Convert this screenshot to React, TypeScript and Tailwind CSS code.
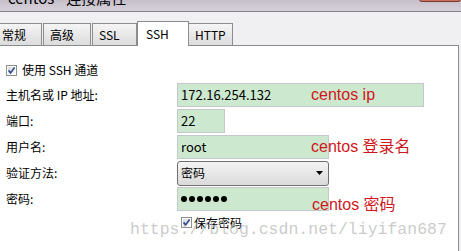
import type { ReactNode } from 'react';

function Check() {
  return (
    <svg width="11" height="11" viewBox="0 0 11 11" className="shrink-0">
      <defs>
        <linearGradient id="cb" x1="0" y1="0" x2="1" y2="1">
          <stop offset="0" stopColor="#d8d8d8" />
          <stop offset="1" stopColor="#ffffff" />
        </linearGradient>
      </defs>
      <rect x="0.5" y="0.5" width="10" height="10" fill="#fff" stroke="#8e8f8f" />
      <rect x="2" y="2" width="7" height="7" fill="url(#cb)" />
      <path d="M2.6 5.4 L4.6 7.9 L8.6 2.4" fill="none" stroke="#30508e" strokeWidth="1.7" />
    </svg>
  );
}

function Tab({ label, className }: { label: string; className: string }) {
  return (
    <div
      className={`flex h-[22px] items-center border border-b-0 border-[#8d8d8d] bg-gradient-to-b from-[#f5f5f5] to-[#dcdcdc] pl-[6px] ${className}`}
    >
      {label}
    </div>
  );
}

function Row({ label, children }: { label: string; children: ReactNode }) {
  return (
    <div className="mb-[2px] flex h-[24px] items-center">
      <div className="w-[177px] pl-[6px]">{label}</div>
      {children}
    </div>
  );
}

const field = 'flex h-[24px] items-center border border-[#c4c8cc] bg-[#cce8cf] pl-[3px] text-[13px]';

export default function App() {
  return (
    <div className="relative h-[251px] w-[461px] overflow-hidden bg-[#f0eff2] font-['Noto_Sans_CJK_SC',sans-serif] text-[12px] text-black">
      {/* 标题栏 */}
      <div className="flex h-[12px] justify-between overflow-hidden border-b border-[#85838c] bg-gradient-to-b from-[#c6bfcb] to-[#d5d1d9]">
        <span className="-mt-[10px] block pl-[8px] text-[15px] leading-[15px]">centos - 连接属性</span>
        <span className="-mt-[1px] h-[3px] w-[42px] rounded-b-[3px] border border-[#7a3a30] bg-[#c8705e]" />
      </div>

      {/* 标签页 */}
      <div className="relative z-10 flex h-[33px] items-end">
        <Tab label="常规" className="-ml-[5px] w-[47px]" />
        <Tab label="高级" className="ml-[1px] w-[48px]" />
        <Tab label="SSL" className="ml-[1px] w-[45px]" />
        <div className="-mb-[1px] flex h-[25px] w-[52px] items-start border border-b-0 border-[#8d8d8d] bg-white pl-[8px] pt-[3px]">
          SSH
        </div>
        <Tab label="HTTP" className="-ml-[1px] w-[45px]" />
      </div>

      {/* 内容 */}
      <div className="h-[206px] w-[459px] border-t border-r border-[#898c8f] bg-white pt-[18px]">
        <div className="flex h-[12px] items-center gap-[5px] pl-[6px]">
          <Check />
          <span>使用 SSH 通道</span>
        </div>

        <div className="mt-[7px]">
          <Row label="主机名或 IP 地址:">
            <div className={`${field} w-[247px]`}>172.16.254.132</div>
          </Row>
          <Row label="端口:">
            <div className={`${field} w-[48px]`}>22</div>
          </Row>
          <Row label="用户名:">
            <div className={`${field} w-[152px]`}>root</div>
          </Row>
          <Row label="验证方法:">
            <div className="flex h-[25px] w-[152px] items-center justify-between rounded-[3px] border border-[#707070] bg-gradient-to-b from-[#f4f4f4] to-[#dadada] pl-[3px] pr-[5px]">
              <span>密码</span>
              <svg width="7" height="4" viewBox="0 0 7 4">
                <path d="M0 0 L7 0 L3.5 4 Z" fill="#000" />
              </svg>
            </div>
          </Row>
          <Row label="密码:">
            <div className={`${field} w-[152px] gap-[2px]`}>
              {[0, 1, 2, 3, 4, 5].map((i) => (
                <span key={i} className="h-[6px] w-[6px] rounded-full bg-black" />
              ))}
            </div>
          </Row>
        </div>

        <div className="mt-[6px] flex h-[11px] items-center gap-[2px] pl-[181px]">
          <Check />
          <span>保存密码</span>
        </div>
      </div>

      {/* 标注 */}
      <div className="pointer-events-none absolute left-[311px] top-[85px] font-['Liberation_Sans','Noto_Sans_CJK_SC',sans-serif] text-[16px] leading-[20px] text-[#d0161c]">
        centos ip
      </div>
      <div className="pointer-events-none absolute left-[311px] top-[137px] font-['Liberation_Sans','Noto_Sans_CJK_SC',sans-serif] text-[16px] leading-[20px] text-[#d0161c]">
        centos 登录名
      </div>
      <div className="pointer-events-none absolute left-[312px] top-[195px] font-['Liberation_Sans','Noto_Sans_CJK_SC',sans-serif] text-[16px] leading-[20px] text-[#d0161c]">
        centos 密码
      </div>

      {/* 水印 */}
      <div className="pointer-events-none absolute left-[130px] top-[220px] font-['Liberation_Mono',monospace] text-[16.5px] leading-[20px] text-[#b4b4b4]/70">
        https://blog.csdn.net/liyifan687
      </div>
    </div>
  );
}
